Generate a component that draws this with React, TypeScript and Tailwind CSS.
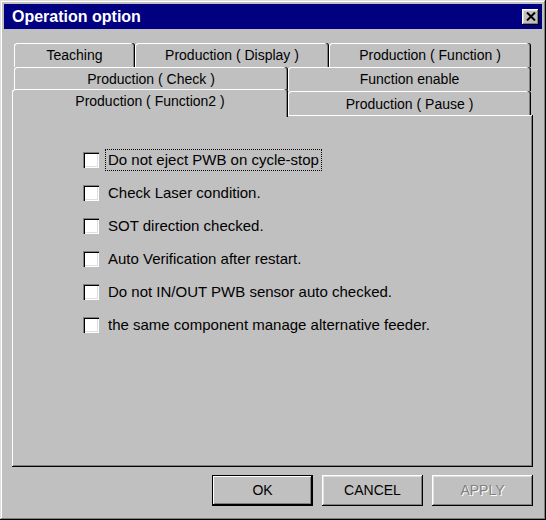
import React from 'react'

const raised =
  'shadow-[inset_-1px_-1px_0_#000,inset_1px_1px_0_#fff,inset_-2px_-2px_0_#808080,inset_2px_2px_0_#dfdfdf]'

function Tab({ label, className = '' }: { label: string; className?: string }) {
  return (
    <div
      className={`flex items-center justify-center rounded-t-[3px] bg-[#c0c0c0] text-[14px] text-black shadow-[inset_-1px_0_0_#000,inset_-2px_0_0_#808080,inset_1px_1px_0_#fff] ${className}`}
    >
      {label}
    </div>
  )
}

function Check({ label, focused }: { label: string; focused?: boolean }) {
  return (
    <div className="flex h-[33px] items-center">
      <span className="h-[16px] w-[16px] bg-white shadow-[inset_1px_1px_0_#808080,inset_2px_2px_0_#000,inset_-1px_-1px_0_#fff,inset_-2px_-2px_0_#dfdfdf]" />
      <span
        className={`ml-[7px] px-[2px] py-[1px] text-[15px] leading-[18px] ${
          focused ? 'outline-1 outline-dotted outline-black' : ''
        }`}
      >
        {label}
      </span>
    </div>
  )
}

export default function App() {
  const options = [
    'Do not eject PWB on cycle-stop',
    'Check Laser condition.',
    'SOT direction checked.',
    'Auto Verification after restart.',
    'Do not IN/OUT PWB sensor auto checked.',
    'the same component manage alternative feeder.',
  ]

  return (
    <div
      className={`flex h-[520px] w-[546px] flex-col bg-[#c0c0c0] p-[4px] font-['Liberation_Sans',Arial,sans-serif] text-black shadow-[inset_-1px_-1px_0_#000,inset_1px_1px_0_#dfdfdf,inset_-2px_-2px_0_#808080,inset_2px_2px_0_#fff]`}
    >
      {/* title bar */}
      <div className="flex h-[25px] items-center justify-between bg-[#000080] pl-[8px] pr-[3px]">
        <span className="text-[16px] font-bold text-white">Operation option</span>
        <button className={`flex h-[16px] w-[17px] items-center justify-center bg-[#c0c0c0] ${raised}`}>
          <svg width="10" height="9" viewBox="0 0 10 9">
            <path d="M1 0.5 L9 8.5 M9 0.5 L1 8.5" stroke="#000" strokeWidth="2" />
          </svg>
        </button>
      </div>

      <div className="flex flex-1 flex-col pl-[8px] pr-[9px] pt-[14px]">
        {/* tab rows */}
        <div className="flex flex-col pl-[2px] pr-[2px]">
          <div className="flex h-[24px]">
            <Tab label="Teaching" className="w-[121px]" />
            <Tab label="Production ( Display )" className="w-[194px]" />
            <Tab label="Production ( Function )" className="flex-1" />
          </div>
          <div className="flex h-[24px]">
            <Tab label="Production ( Check )" className="w-[274px]" />
            <Tab label="Function enable" className="flex-1" />
          </div>
          <div className="flex h-[24px] items-start">
            <Tab
              label="Production ( Function2 )"
              className="relative z-10 -ml-[2px] -mt-[2px] h-[28px] w-[276px] pb-[4px]"
            />
            <Tab label="Production ( Pause )" className="h-[24px] flex-1 pt-[2px]" />
          </div>
        </div>

        {/* panel */}
        <div className="flex h-[352px] flex-col pl-[71px] pt-[28px] shadow-[inset_-1px_-1px_0_#000,inset_1px_1px_0_#fff,inset_-2px_-2px_0_#808080]">
          {options.map((o, i) => (
            <Check key={o} label={o} focused={i === 0} />
          ))}
        </div>

        {/* buttons */}
        <div className="mt-[8px] flex justify-end gap-[9px] text-[14px]">
          <button className="h-[31px] w-[101px] bg-[#c0c0c0] shadow-[inset_0_0_0_1px_#000,inset_-2px_-2px_0_#000,inset_2px_2px_0_#fff,inset_-3px_-3px_0_#808080]">
            OK
          </button>
          <button className={`h-[31px] w-[101px] bg-[#c0c0c0] ${raised}`}>CANCEL</button>
          <button
            className={`h-[31px] w-[101px] bg-[#c0c0c0] text-[#808080] [text-shadow:1px_1px_0_#fff] ${raised}`}
          >
            APPLY
          </button>
        </div>
      </div>
    </div>
  )
}
